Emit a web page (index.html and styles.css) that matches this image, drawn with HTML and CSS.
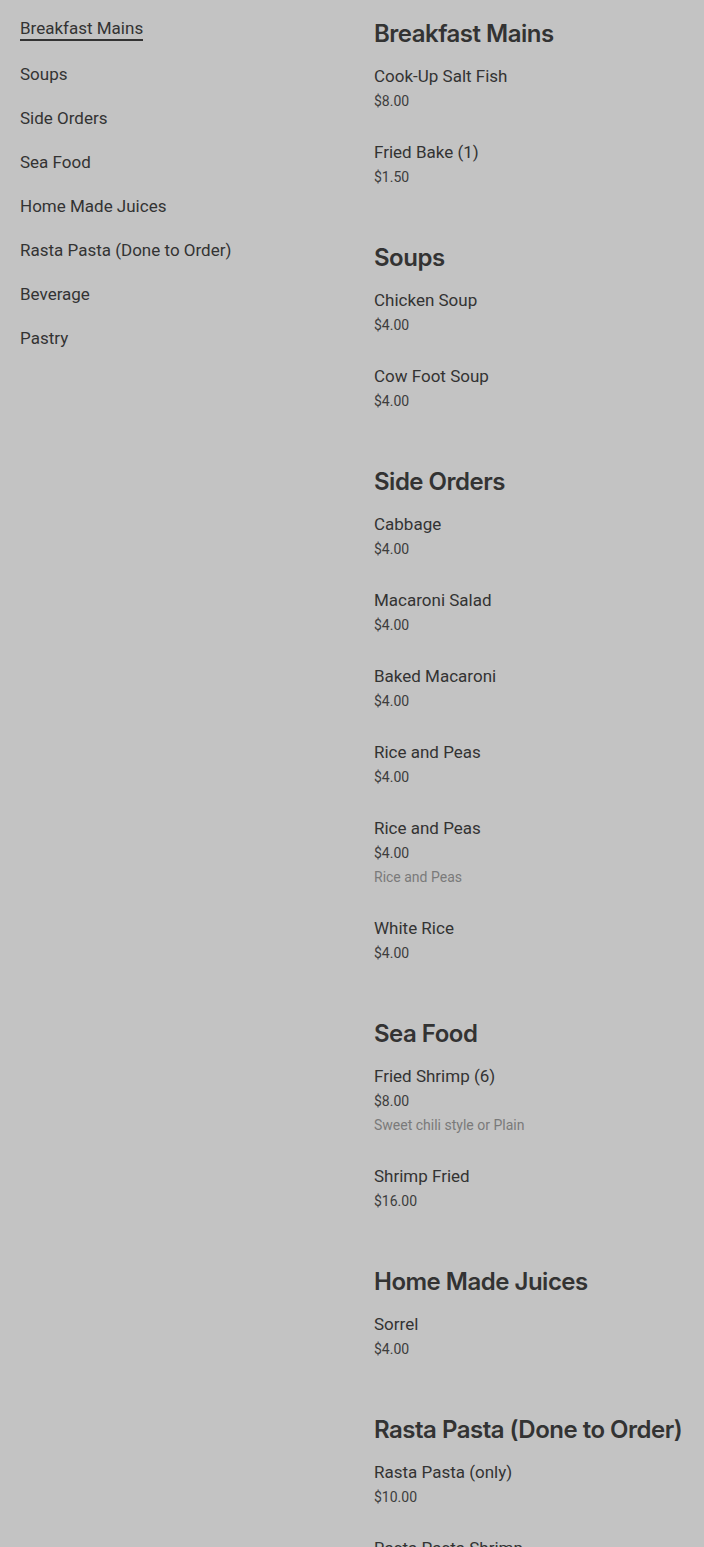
FILE: index.html
```html
<!DOCTYPE html>
<html>
<head>
<meta charset="utf-8">
<link rel="stylesheet" href="styles.css">
</head>
<body>
<div class="page">
  <nav class="nav">
    <a class="nav-item active">Breakfast Mains</a>
    <a class="nav-item">Soups</a>
    <a class="nav-item">Side Orders</a>
    <a class="nav-item">Sea Food</a>
    <a class="nav-item">Home Made Juices</a>
    <a class="nav-item">Rasta Pasta (Done to Order)</a>
    <a class="nav-item">Beverage</a>
    <a class="nav-item">Pastry</a>
  </nav>
  <main class="menu">
    <section class="section">
      <h2 class="section-title">Breakfast Mains</h2>
      <div class="item"><div class="name">Cook-Up Salt Fish</div><div class="price">$8.00</div></div>
      <div class="item"><div class="name">Fried Bake (1)</div><div class="price">$1.50</div></div>
    </section>
    <section class="section">
      <h2 class="section-title">Soups</h2>
      <div class="item"><div class="name">Chicken Soup</div><div class="price">$4.00</div></div>
      <div class="item"><div class="name">Cow Foot Soup</div><div class="price">$4.00</div></div>
    </section>
    <section class="section">
      <h2 class="section-title">Side Orders</h2>
      <div class="item"><div class="name">Cabbage</div><div class="price">$4.00</div></div>
      <div class="item"><div class="name">Macaroni Salad</div><div class="price">$4.00</div></div>
      <div class="item"><div class="name">Baked Macaroni</div><div class="price">$4.00</div></div>
      <div class="item"><div class="name">Rice and Peas</div><div class="price">$4.00</div></div>
      <div class="item"><div class="name">Rice and Peas</div><div class="price">$4.00</div><div class="desc">Rice and Peas</div></div>
      <div class="item"><div class="name">White Rice</div><div class="price">$4.00</div></div>
    </section>
    <section class="section">
      <h2 class="section-title">Sea Food</h2>
      <div class="item"><div class="name">Fried Shrimp (6)</div><div class="price">$8.00</div><div class="desc">Sweet chili style or Plain</div></div>
      <div class="item"><div class="name">Shrimp Fried</div><div class="price">$16.00</div></div>
    </section>
    <section class="section">
      <h2 class="section-title">Home Made Juices</h2>
      <div class="item"><div class="name">Sorrel</div><div class="price">$4.00</div></div>
    </section>
    <section class="section">
      <h2 class="section-title">Rasta Pasta (Done to Order)</h2>
      <div class="item"><div class="name">Rasta Pasta (only)</div><div class="price">$10.00</div></div>
      <div class="item"><div class="name">Rasta Pasta Shrimp</div><div class="price">$14.00</div></div>
    </section>
  </main>
</div>
</body>
</html>
```

FILE: styles.css
```css
html, body {
  margin: 0;
  padding: 0;
  background: #c3c3c3;
}
body {
  font-family: Roboto, "Liberation Sans", sans-serif;
  color: #333333;
}
.page {
  display: grid;
  grid-template-columns: 354px 1fr;
  padding-left: 20px;
}
.nav {
  display: flex;
  flex-direction: column;
  align-items: flex-start;
  gap: 22px;
  padding-top: 17px;
}
.nav-item {
  font-size: 17px;
  line-height: 22px;
  color: #333333;
}
.nav-item.active {
  border-bottom: 2px solid #333333;
}
.menu {
  padding-top: 18px;
}
.section {
  margin-bottom: 27px;
}
.section-title {
  margin: 0 0 13px 0;
  font-family: Inter, sans-serif;
  font-weight: 600;
  font-size: 24px;
  line-height: 32px;
  letter-spacing: -0.5px;
  color: #333333;
}
.item {
  padding-bottom: 26px;
}
.name {
  font-size: 17px;
  line-height: 26px;
  color: #333333;
}
.price {
  font-size: 14px;
  line-height: 24px;
  color: #3d3d3d;
}
.desc {
  font-size: 14px;
  line-height: 24px;
  color: #7a7a7a;
}
```
